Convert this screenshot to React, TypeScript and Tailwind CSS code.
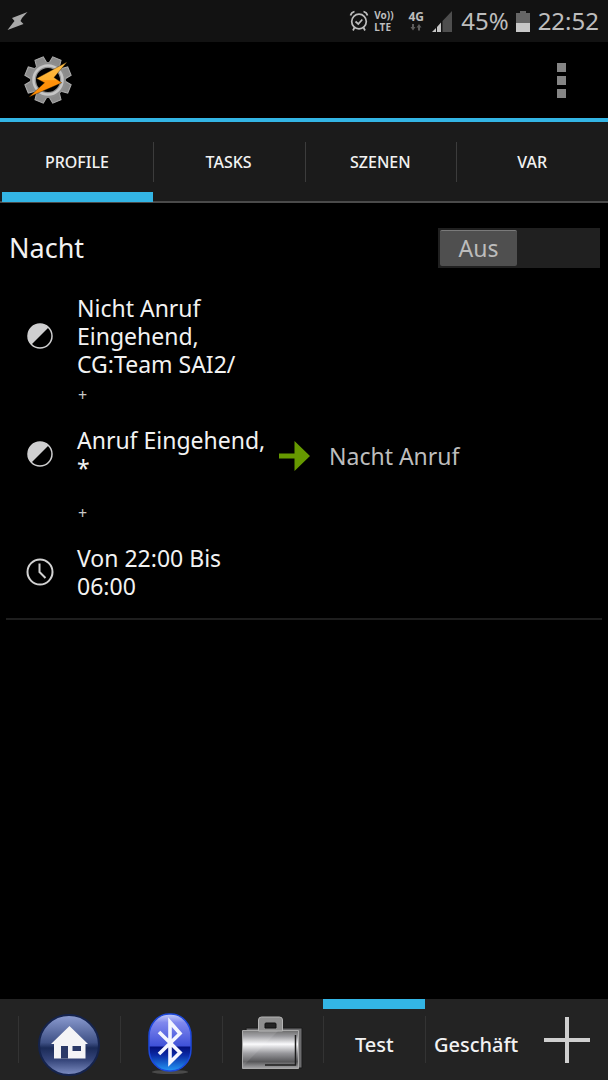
import { useState } from 'react'
import clsx from 'clsx'

type ContextType = 'state' | 'time'

interface ProfileContext {
  id: string
  type: ContextType
  label: string
}

const tabs = ['PROFILE', 'TASKS', 'SZENEN', 'VAR']

const contexts: ProfileContext[] = [
  { id: 'not-call', type: 'state', label: 'Nicht Anruf Eingehend, CG:Team SAI2/' },
  { id: 'call', type: 'state', label: 'Anruf Eingehend, *' },
  { id: 'time', type: 'time', label: 'Von 22:00 Bis 06:00' },
]

// The gear has eight teeth, none of them straight up
const toothAngles = [22.5, 67.5, 112.5, 157.5, 202.5, 247.5, 292.5, 337.5]

function StatusBar() {
  return (
    <div className="flex h-[42px] items-center bg-[#121212] pl-[7px] pr-[9px] text-[#bdbdbd]">
      <svg className="h-[20px] w-[21px]" viewBox="0 0 21 20" fill="#a8a8a8">
        <path d="M20.500 1 5 7l2.500 3-2 2.500L.5 19 16.500 13l-3-3 1.500-3z" />
      </svg>
      <div className="ml-auto flex items-center">
        <svg className="h-[22px] w-[20px]" viewBox="0 0 20 22" fill="none" stroke="#bdbdbd" strokeWidth="1.700">
          <circle cx="10" cy="11.500" r="7.300" />
          <path d="M6.500 11.500 9.300 14l4-4.500M1.500 5.500C2 3.500 3.500 2 5.500 1.500M18.500 5.500C18 3.500 16.500 2 14.500 1.500M5.500 17.500 4 20.500M14.500 17.500l1.500 3" />
        </svg>
        <div className="ml-[5px] flex w-[22px] flex-col text-[10px] leading-[12px] font-bold">
          <span>Vo))</span>
          <span>LTE</span>
        </div>
        <div className="ml-[11px] flex w-[18px] flex-col items-center">
          <span className="text-[12px] leading-[12px] font-bold">4G</span>
          <svg className="h-[8px] w-[12px]" viewBox="0 0 12 8" fill="#5c5c5c">
            <path d="M2 1h2v3h1.500L3 7.500.5 4H2zM8 7.500h2v-3h1.500L9 1 6.500 4.500H8z" />
          </svg>
        </div>
        <svg className="ml-[7px] h-[21px] w-[20px]" viewBox="0 0 20 21">
          <path d="M0 21 4 17v4zM5 16l4-4.500V21H5z" fill="#c4c4c4" />
          <path d="M10.500 10 20 0v21h-9.500z" fill="#4e4e4e" />
        </svg>
        <span className="ml-[9px] text-[24px] leading-[28px]">45%</span>
        <svg className="ml-[7px] h-[21px] w-[14px]" viewBox="0 0 14 21">
          <path d="M4 0h6v2h4v10H0V2h4z" fill="#666" />
          <path d="M0 12h14v9H0z" fill="#c8c8c8" />
        </svg>
        <span className="ml-[8px] text-[24px] leading-[28px]">22:52</span>
      </div>
    </div>
  )
}

function TaskerLogo() {
  return (
    <svg className="h-[48px] w-[48px]" viewBox="0 0 48 48">
      <defs>
        <linearGradient id="bolt" x1="0" y1="0" x2="0" y2="1">
          <stop offset="0" stopColor="#ffc04a" />
          <stop offset=".52" stopColor="#ffb02e" />
          <stop offset=".53" stopColor="#ff920c" />
          <stop offset="1" stopColor="#ff8a00" />
        </linearGradient>
      </defs>
      <g fill="#8b8b8b" stroke="#adadad" strokeWidth="1">
        {toothAngles.map((a) => (
          <path key={a} d="M18.300 9 19.500 .8h9L29.700 9z" transform={`rotate(${a} 24 24)`} />
        ))}
      </g>
      <circle cx="24" cy="24" r="15" fill="#000" stroke="#8f8f8f" strokeWidth="6" />
      <circle cx="24" cy="24" r="14.500" fill="none" stroke="#c6c6c6" strokeWidth="2.500" />
      <path d="M43 6 12.500 22.500 20.500 26.800 5 41 37.800 26.800 30 21.500z" fill="url(#bolt)" stroke="#2b1c05" strokeWidth=".4" />
    </svg>
  )
}

function ContextIcon({ type }: { type: ContextType }) {
  if (type === 'time') {
    return (
      <svg className="h-[28px] w-[28px]" viewBox="0 0 28 28" fill="none" stroke="#d2d2d2">
        <circle cx="14" cy="14" r="12.500" strokeWidth="2" />
        <path d="M13.500 5.500V14l6 6" strokeWidth="2" />
      </svg>
    )
  }
  return (
    <svg className="h-[28px] w-[28px]" viewBox="0 0 28 28">
      <circle cx="14" cy="14" r="12" fill="none" stroke="#cfcfd0" strokeWidth="1.500" />
      <path d="M22.500 5.500A12 12 0 0 0 5.500 22.500z" fill="#cfcfd0" />
    </svg>
  )
}

function HomeIcon() {
  return (
    <svg className="h-[64px] w-[64px]" viewBox="0 0 64 64">
      <defs>
        <linearGradient id="homeBall" x1="0" y1="0" x2="0" y2="1">
          <stop offset="0" stopColor="#8d9dd2" />
          <stop offset=".46" stopColor="#3f5186" />
          <stop offset=".55" stopColor="#1b2b58" />
          <stop offset=".75" stopColor="#35457a" />
          <stop offset="1" stopColor="#7f8fc4" />
        </linearGradient>
      </defs>
      <circle cx="32" cy="32" r="30" fill="url(#homeBall)" stroke="#15234c" strokeWidth="2" />
      <path d="M32.500 13 51 31h-2.500v14.500H17V31h-3z" fill="#f4f4f6" />
      <path d="M24 33h7v12.500h-7z" fill="#2b3a68" />
      <path d="M35.500 33H44v5h-8.500z" fill="#2b3a68" />
    </svg>
  )
}

function BluetoothIcon() {
  return (
    <svg className="h-[64px] w-[46px]" viewBox="0 0 46 64">
      <defs>
        <linearGradient id="btBody" x1="0" y1="0" x2="0" y2="1">
          <stop offset="0" stopColor="#c4cdfa" />
          <stop offset=".15" stopColor="#8088ee" />
          <stop offset=".56" stopColor="#3f51d8" />
          <stop offset=".58" stopColor="#04107c" />
          <stop offset=".72" stopColor="#0a2aa6" />
          <stop offset="1" stopColor="#2398f5" />
        </linearGradient>
      </defs>
      <ellipse cx="22" cy="59" rx="18" ry="2" fill="#4a4a4a" />
      <rect x="1" y="1" width="42" height="57" rx="20" ry="22" fill="url(#btBody)" stroke="#1c48dc" strokeWidth="1.500" />
      <path d="M11 19 32 39.500 22 49.500V9l10 11.500L11 41" fill="none" stroke="#f3f5ff" strokeWidth="3.600" />
    </svg>
  )
}

function BriefcaseIcon() {
  return (
    <svg className="h-[60px] w-[64px]" viewBox="0 0 64 60">
      <defs>
        <linearGradient id="caseBody" x1="0" y1="0" x2="0" y2="1">
          <stop offset="0" stopColor="#6b6b6b" />
          <stop offset=".15" stopColor="#9a9a9e" />
          <stop offset=".36" stopColor="#fafafc" />
          <stop offset=".6" stopColor="#97979b" />
          <stop offset=".82" stopColor="#58585a" />
          <stop offset="1" stopColor="#a8a8aa" />
        </linearGradient>
      </defs>
      <path d="M6 13h56v40H8z" fill="#6c6c6e" stroke="#1b1b1b" strokeWidth="1" />
      <path d="M2.500 15.500h56v38h-56z" fill="url(#caseBody)" stroke="#aaa" strokeWidth="1" />
      <path d="M18.500 16V5q0-3 3-3h18q3 0 3 3v11z" fill="#8f8f8f" stroke="#b5b5b5" strokeWidth="1" />
      <path d="M25 13V9q0-1 1-1h9q1 0 1 1v4z" fill="#232323" stroke="#111" strokeWidth="1" />
      <path d="M55.500 20v30H25" fill="none" stroke="#1e1e1e" strokeWidth="1.500" />
      <path d="M3 51 38 16H3z" fill="#fff" opacity=".1" />
    </svg>
  )
}

const projects = [
  { name: 'Home', icon: <HomeIcon /> },
  { name: 'Bluetooth', icon: <BluetoothIcon /> },
  { name: 'Koffer', icon: <BriefcaseIcon /> },
  { name: 'Test' },
  { name: 'Geschäft' },
]

export default function App() {
  const [activeTab, setActiveTab] = useState('PROFILE')
  const [activeProject, setActiveProject] = useState('Test')
  const [enabled, setEnabled] = useState(false)

  return (
    <div className="flex min-h-screen flex-col bg-black font-['Noto_Sans',sans-serif] text-[#f2f2f2]">
      <StatusBar />

      <header className="flex h-[80px] items-center justify-between border-b-4 border-[#33b5e5] pl-6 pr-[33px]">
        <TaskerLogo />
        <button aria-label="Menü" className="flex w-7 flex-col items-center gap-1">
          <span className="h-[9px] w-[9px] bg-[#858585]" />
          <span className="h-[9px] w-[9px] bg-[#858585]" />
          <span className="h-[9px] w-[9px] bg-[#858585]" />
        </button>
      </header>

      <nav className="flex h-[81px] border-b-2 border-[#4a4a4a] bg-[#1b1b1b] pl-[1px]">
        {tabs.map((tab, i) => (
          <button
            key={tab}
            onClick={() => setActiveTab(tab)}
            className="relative flex flex-1 items-center justify-center text-[16px] font-medium"
          >
            {tab}
            {i < tabs.length - 1 && <span className="absolute top-[20px] right-[-1px] h-10 w-px bg-[#3c3c3c]" />}
            {tab === activeTab && <span className="absolute right-0 bottom-[-1px] left-px h-[10px] bg-[#33b5e5]" />}
          </button>
        ))}
      </nav>

      <main className="flex-1 px-[6px] pt-[25px]">
        <section className="border-b-2 border-[#1e1e1e]">
          <div className="flex items-center justify-between pr-[2px] pl-[3px]">
            <h2 className="text-[27px] leading-[40px]">Nacht</h2>
            <button
              role="switch"
              aria-checked={enabled}
              aria-label="Nacht"
              onClick={() => setEnabled(!enabled)}
              className={clsx('flex h-10 w-[162px] bg-[#202020] p-[2px]', enabled && 'justify-end')}
            >
              <span className="flex h-9 w-[77px] items-center justify-center rounded-xs border-t border-[#7a7a7a] bg-[#4f4f4f] text-[23px] text-[#bcbcbc]">
                {enabled ? 'An' : 'Aus'}
              </span>
            </button>
          </div>

          <div className="flex items-center pt-[26px]">
            <ul className="pb-[4px]">
              {contexts.map((c, i) => (
                <li key={c.id}>
                  {i > 0 && <div className="pl-[72px] text-[16px] leading-[34px] text-[#c8c8c8]">+</div>}
                  <div className="flex min-h-[84px] items-center pl-[20px]">
                    <ContextIcon type={c.type} />
                    <p className="ml-[23px] w-[194px] text-[23px] leading-[28px]">{c.label}</p>
                  </div>
                </li>
              ))}
            </ul>
            <svg className="ml-2 h-[30px] w-[31px] shrink-0" viewBox="0 0 31 30">
              <path d="M0 12.500h15.500V0L31 15 15.500 30V17.500H0z" fill="#669900" />
            </svg>
            <a href="#nacht-anruf" className="ml-[19px] text-[23px] leading-[28px] text-[#bdbdbd]">Nacht Anruf</a>
          </div>
        </section>
      </main>

      <footer className="flex h-[81px] bg-[#232323] pl-[18px]">
        {projects.map((p) => (
          <button
            key={p.name}
            aria-label={p.name}
            onClick={() => setActiveProject(p.name)}
            className="relative flex flex-1 items-center justify-center pt-[10px] text-[20px] font-medium"
          >
            <span className="absolute top-[17px] left-0 h-[47px] w-px bg-[#333]" />
            {p.name === activeProject && <span className="absolute inset-x-0 top-0 h-[10px] bg-[#33b5e5]" />}
            {p.icon ?? p.name}
          </button>
        ))}
        <button aria-label="Neues Projekt" className="flex w-[81px] items-center justify-center">
          <svg className="h-[46px] w-[46px]" viewBox="0 0 46 46" fill="#cfcfcf">
            <path d="M21 0h4v21h21v4H25v21h-4V25H0v-4h21z" />
          </svg>
        </button>
      </footer>
    </div>
  )
}
